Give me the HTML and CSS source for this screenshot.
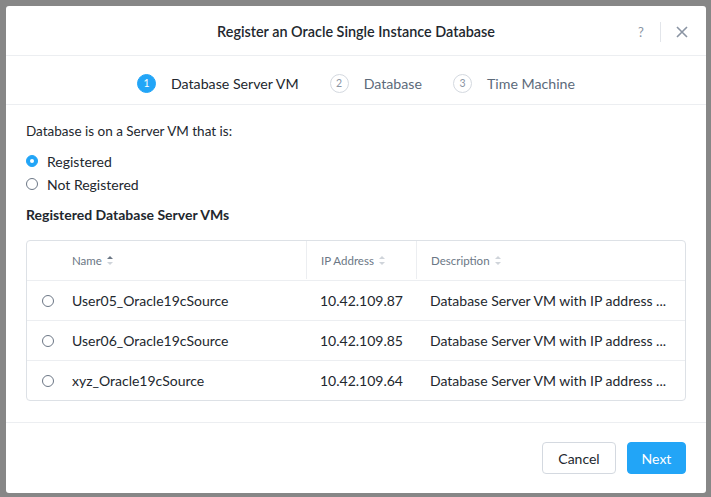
FILE: index.html
```html
<!DOCTYPE html>
<html>
<head>
<meta charset="utf-8">
<link rel="stylesheet" href="styles.css">
</head>
<body>
<div class="modal">
  <div class="modal-header">
    <div class="title">Register an Oracle Single Instance Database</div>
    <div class="header-actions">
      <span class="help">?</span>
      <span class="divider"></span>
      <svg class="close" width="12" height="12" viewBox="0 0 12 12"><path d="M1 1 L11 11 M11 1 L1 11" stroke="#8a94a3" stroke-width="1.6" fill="none"/></svg>
    </div>
  </div>
  <div class="steps">
    <div class="step active"><span class="num">1</span><span class="label">Database Server VM</span></div>
    <div class="step"><span class="num">2</span><span class="label">Database</span></div>
    <div class="step"><span class="num">3</span><span class="label">Time Machine</span></div>
  </div>
  <div class="body">
    <div class="question">Database is on a Server VM that is:</div>
    <div class="radios">
      <label class="radio"><span class="dot checked"></span>Registered</label>
      <label class="radio"><span class="dot"></span>Not Registered</label>
    </div>
    <div class="section-title">Registered Database Server VMs</div>
    <div class="table">
      <div class="row head">
        <div class="c sel"></div>
        <div class="c name">Name <span class="sort up"></span></div>
        <div class="c ip sep">IP Address <span class="sort"></span></div>
        <div class="c desc sep">Description <span class="sort"></span></div>
      </div>
      <div class="row">
        <div class="c sel"><span class="dot"></span></div>
        <div class="c name">User05_Oracle19cSource</div>
        <div class="c ip">10.42.109.87</div>
        <div class="c desc">Database Server VM with IP address ...</div>
      </div>
      <div class="row">
        <div class="c sel"><span class="dot"></span></div>
        <div class="c name">User06_Oracle19cSource</div>
        <div class="c ip">10.42.109.85</div>
        <div class="c desc">Database Server VM with IP address ...</div>
      </div>
      <div class="row last">
        <div class="c sel"><span class="dot"></span></div>
        <div class="c name">xyz_Oracle19cSource</div>
        <div class="c ip">10.42.109.64</div>
        <div class="c desc">Database Server VM with IP address ...</div>
      </div>
    </div>
  </div>
  <div class="footer">
    <button class="btn cancel">Cancel</button>
    <button class="btn next">Next</button>
  </div>
</div>
</body>
</html>
```
FILE: styles.css
```css
html, body { margin: 0; padding: 0; }
body {
  width: 711px; height: 497px;
  background: #878787;
  font-family: Lato, "Open Sans", sans-serif;
  color: #22272e;
  padding: 6px 0 0 6px;
  box-sizing: border-box;
  overflow: hidden;
}
.modal {
  width: 700px; height: 487px;
  background: #fff;
  border-radius: 3px;
  display: flex; flex-direction: column;
}
.modal-header {
  height: 49px; flex: none;
  border-bottom: 1px solid #eceef1;
  display: flex; align-items: center; justify-content: center;
  position: relative;
}
.title { font-size: 14.4px; font-weight: 600; padding-top: 2px; }
.header-actions {
  position: absolute; right: 18px; top: 16px;
  display: flex; align-items: center;
}
.help { color: #8a94a3; font-size: 13px; width: 8px; }
.divider { width: 1px; height: 20px; background: #e2e5ea; margin: 0 15px 0 14px; }
.close { display: block; }
.steps {
  height: 49px; flex: none;
  box-sizing: border-box;
  padding-top: 6px;
  border-bottom: 1px solid #eceef1;
  display: flex; align-items: center; justify-content: center;
  gap: 31px;
}
.step { display: flex; align-items: center; color: #5c6a7a; font-size: 14.2px; }
.step .num {
  width: 17px; height: 17px; border-radius: 50%;
  border: 1px solid #d4d9e0;
  color: #8a94a3; font-size: 10.5px;
  display: flex; align-items: center; justify-content: center;
  margin-right: 15px;
}
.step.active { color: #22272e; }
.step.active .num { background: #22a5f7; border-color: #22a5f7; color: #fff; }
.body { padding: 18px 20px 0 20px; flex: 1; }
.question { font-size: 13.5px; height: 18px; }
.radios { margin-top: 11px; display: flex; flex-direction: column; gap: 5px; }
.radio { display: flex; align-items: center; font-size: 14px; height: 18px; }
.dot {
  width: 10px; height: 10px; border-radius: 50%;
  border: 1px solid #6c7786; background: #fff;
  display: inline-block; box-sizing: content-box; flex: none;
}
.radio .dot { margin-right: 9px; }
.dot.checked { background: #22a5f7; border-color: #22a5f7; position: relative; }
.dot.checked::after {
  content: ""; position: absolute; left: 3px; top: 3px;
  width: 4px; height: 4px; border-radius: 50%; background: #fff;
}
.section-title { font-size: 14px; font-weight: 700; margin-top: 13px; height: 18px; }
.table {
  margin-top: 16px;
  border: 1px solid #dde1e6; border-radius: 4px;
}
.row { display: flex; height: 40px; box-sizing: border-box; border-bottom: 1px solid #eceef1; align-items: stretch; }
.row.last { border-bottom: none; height: 39px; }
.row.head { color: #6b7785; padding-bottom: 1px; }
.c { display: flex; align-items: center; font-size: 14px; white-space: nowrap; overflow: hidden; }
.row.head .c { font-size: 11.5px; }
.sel { width: 45px; padding-left: 15px; box-sizing: border-box; }
.name { width: 234px; }
.ip { width: 110px; padding-left: 14px; box-sizing: border-box; }
.desc { flex: 1; padding-left: 14px; }
.sep { border-left: 1px solid #eceef1; }
.sort {
  display: inline-block; width: 6px; height: 9px; margin-left: 5px; position: relative;
}
.sort::before, .sort::after {
  content: ""; position: absolute; left: 0;
  border-left: 3px solid transparent; border-right: 3px solid transparent;
}
.sort::before { top: 0; border-bottom: 3.5px solid #cfd4da; }
.sort::after { bottom: 0; border-top: 3.5px solid #cfd4da; }
.sort.up::before { border-bottom-color: #6b7785; }
.footer {
  height: 71px; flex: none; box-sizing: border-box;
  border-top: 1px solid #eceef1;
  display: flex; align-items: center; justify-content: flex-end;
  padding-right: 20px;
  gap: 11px;
}
.btn {
  height: 32px; border-radius: 4px; font-family: inherit; font-size: 14px;
  padding: 0; cursor: pointer;
}
.cancel { width: 74px; background: #fff; border: 1px solid #d4d9e0; color: #22272e; }
.next { width: 59px; background: #22a5f7; border: 1px solid #22a5f7; color: #fff; }
```
